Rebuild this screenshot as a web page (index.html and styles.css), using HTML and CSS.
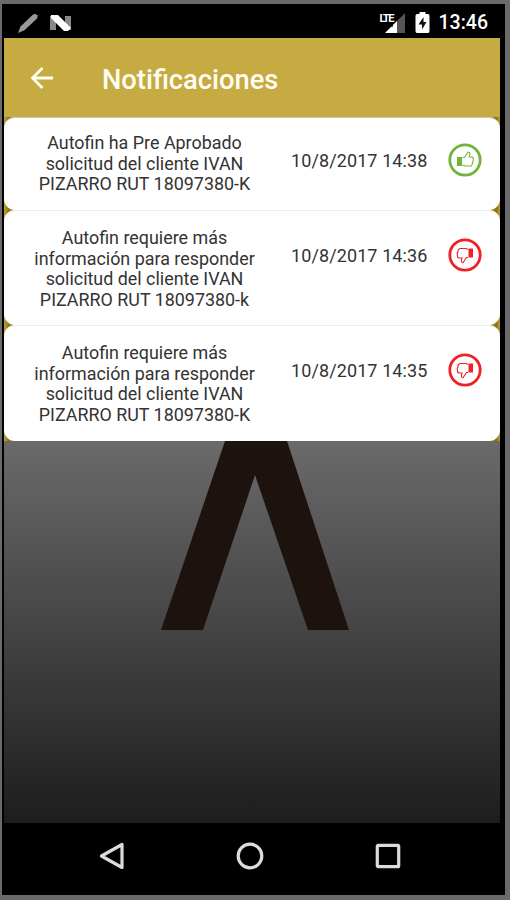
FILE: index.html
```html
<!DOCTYPE html>
<html lang="es">
<head>
<meta charset="utf-8">
<title>Notificaciones</title>
<link rel="stylesheet" href="styles.css">
</head>
<body>
<div class="phone">
  <div class="status">
    <svg class="pencil" width="22" height="22" viewBox="0 0 22 22"><path d="M1 21 L3.5 14.5 L15.5 3 Q18 .8 20.3 3.2 Q21.5 5 19.5 7 L7.5 18.2Z" fill="#999"/></svg>
    <svg class="nougat" width="22" height="16" viewBox="0 0 22 16"><path d="M0 1H6V15H0ZM15 1H21V15H15Z" fill="#888"/><path d="M1 0H8L21 13 18 16H14L1 3Z" fill="#fff"/></svg>
    <span class="spacer"></span>
    <div class="signal">
      <span class="lte">LTE</span>
      <svg width="20" height="20" viewBox="0 0 20 20"><path d="M0 20 L20 0V20Z" fill="#555"/><path d="M0 20 L6 14H8V12L12 8V20Z" fill="#fff"/></svg>
    </div>
    <svg class="battery" width="15" height="21" viewBox="0 0 15 21"><path d="M4.5 0H10.5V2H13Q14.5 2 14.5 4V19Q14.5 21 13 21H2Q.5 21 .5 19V4Q.5 2 2 2H4.5Z" fill="#fff"/><path d="M8.5 5 L3.5 12.5H7V17.5L11.5 10H8.5Z" fill="#111"/></svg>
    <span class="clock">13:46</span>
  </div>
  <div class="screen">
    <header class="bar">
      <svg width="24" height="22" viewBox="0 0 24 22" fill="none" stroke="#fffdf0" stroke-width="2.8"><path d="M23 11H2.5M12.5 1L2.5 11L12.5 21"/></svg>
      <h1>Notificaciones</h1>
    </header>
    <main class="list">
      <article class="card short">
        <p class="msg">Autofin ha Pre Aprobado<br>solicitud del cliente IVAN<br>PIZARRO RUT 18097380-K</p>
        <time>10/8/2017 14:38</time>
        <svg class="thumb up" width="34" height="34" viewBox="0 0 34 34"><circle cx="17" cy="17" r="15.2"/><path class="fill" d="M9 14H14V23H9Z"/><path class="hand" d="M14.5 14.5H16.5L20 9Q22.8 8.8 21.3 14H24.5Q26 15 25 17Q25.8 18.5 24.5 19.5Q25 21.5 23 23H17L14.5 22"/></svg>
      </article>
      <article class="card">
        <p class="msg">Autofin requiere más<br>información para responder<br>solicitud del cliente IVAN<br>PIZARRO RUT 18097380-k</p>
        <time>10/8/2017 14:36</time>
        <svg class="thumb down" width="34" height="34" viewBox="0 0 34 34"><circle cx="17" cy="17" r="15.2"/><path class="fill" d="M20.5 10.5H25V19.5H20.5Z"/><path class="hand" d="M20 11.5L18 10.5H12Q9.5 11.5 10 14Q8.5 15.5 9.5 17Q9 19.5 11 20H14Q12.5 25 15 24.7L18.5 19.5H20"/></svg>
      </article>
      <article class="card last">
        <p class="msg">Autofin requiere más<br>información para responder<br>solicitud del cliente IVAN<br>PIZARRO RUT 18097380-K</p>
        <time>10/8/2017 14:35</time>
        <svg class="thumb down" width="34" height="34" viewBox="0 0 34 34"><circle cx="17" cy="17" r="15.2"/><path class="fill" d="M20.5 10.5H25V19.5H20.5Z"/><path class="hand" d="M20 11.5L18 10.5H12Q9.5 11.5 10 14Q8.5 15.5 9.5 17Q9 19.5 11 20H14Q12.5 25 15 24.7L18.5 19.5H20"/></svg>
      </article>
    </main>
    <div class="backdrop">
      <svg width="188" height="189" viewBox="0 0 188 189"><path d="M64 0H126L188 189H147L94 34L42 189H0Z" fill="#1e120f"/></svg>
    </div>
  </div>
  <nav class="nav">
    <svg width="28" height="28" viewBox="0 0 28 28"><path d="M24 2.5V25.5L3.5 14Z"/></svg>
    <svg width="28" height="28" viewBox="0 0 28 28"><circle cx="14" cy="14" r="11.8"/></svg>
    <svg width="28" height="28" viewBox="0 0 28 28"><rect x="3.3" y="3.3" width="21.4" height="21.4" rx="1"/></svg>
  </nav>
</div>
</body>
</html>
```
FILE: styles.css
```css
* { box-sizing: border-box; }
body {
  margin: 0;
  height: 900px;
  padding: 4px 5px 5px 2px;
  background: #6a6a6a;
  font-family: Roboto, sans-serif;
  overflow: hidden;
}
.phone {
  height: 891px;
  background: #000;
  display: flex;
  flex-direction: column;
}
.status {
  height: 34px;
  display: flex;
  align-items: center;
  padding: 3px 17px 0 15px;
}
.nougat { margin-left: 11px; }
.spacer { flex: 1; }
.signal { display: flex; margin-right: 10px; }
.signal svg { margin-left: -13px; }
.lte {
  width: 18px;
  color: #fff;
  font: 700 11px/12px "Roboto", sans-serif;
  letter-spacing: -1.4px;
}
.clock {
  margin-left: 9px;
  color: #fff;
  font-size: 19.5px;
  font-weight: 500;
  line-height: 24px;
}
.screen {
  height: 785px;
  margin: 0 5px 0 2px;
  display: flex;
  flex-direction: column;
}
.bar {
  height: 79px;
  display: flex;
  align-items: center;
  padding-left: 26px;
  background: #c5ab42;
}
h1 {
  margin: 5px 0 0 48px;
  color: #fffdf2;
  font-size: 27.3px;
  font-weight: 500;
  line-height: 32px;
}
.list {
  background: linear-gradient(90deg, #c0a23c, #8c7109 5px, #b4983b 10px, #b4983b calc(100% - 10px), #84700c calc(100% - 4px), #c0a23c);
}
.card {
  height: 115px;
  display: flex;
  padding-top: 17px;
  background: #fff;
  border: 1px solid #eee;
  border-width: 1px 0 0;
  border-radius: 11px;
}
.card.short {
  height: 93px;
  padding-top: 15px;
  border-top-color: #cfc8c4;
}
.card.last { height: 116px; }
.msg {
  width: 281px;
  margin: 0;
  color: #333;
  font-size: 17.9px;
  line-height: 20.7px;
  text-align: center;
  white-space: nowrap;
}
time {
  width: 157px;
  margin-left: 6px;
  padding-top: 17px;
  color: #333;
  font-size: 18px;
  letter-spacing: 0.1px;
  line-height: 21px;
  white-space: nowrap;
}
.thumb { margin-top: 10px; fill: none; stroke-width: 2.8; }
.thumb .hand { stroke-width: 1.1; }
.up { stroke: #72b33b; }
.up .fill { fill: #72b33b; stroke: none; }
.down { stroke: #ef2026; }
.down .fill { fill: #ef2026; stroke: none; }
.backdrop {
  flex: 1;
  padding-left: 157px;
  background: linear-gradient(#6a6a6a, #1d1d1d);
}
.backdrop svg { display: block; }
.nav {
  flex: 1;
  display: flex;
  align-items: center;
  gap: 110px;
  padding: 0 0 6px 96px;
}
.nav svg { fill: none; stroke: #dcdcdc; stroke-width: 3.2; stroke-linejoin: round; }
```
